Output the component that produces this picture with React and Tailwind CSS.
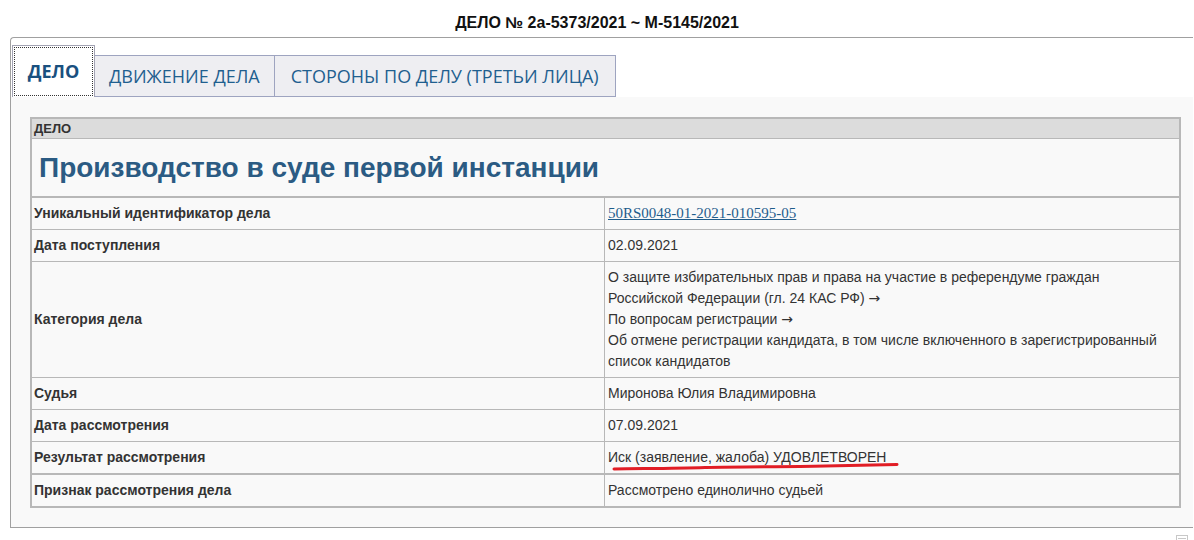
import React from 'react';

const Arrow = () => <span className="font-['DejaVu_Sans',sans-serif] text-[14px]">→</span>;

const rows = [
  { label: 'Уникальный идентификатор дела', link: '50RS0048-01-2021-010595-05' },
  { label: 'Дата поступления', value: '02.09.2021' },
  {
    label: 'Категория дела',
    lines: [
      'О защите избирательных прав и права на участие в референдуме граждан',
      <>Российской Федерации (гл. 24 КАС РФ) <Arrow /></>,
      <>По вопросам регистрации <Arrow /></>,
      'Об отмене регистрации кандидата, в том числе включенного в зарегистрированный',
      'список кандидатов',
    ],
  },
  { label: 'Судья', value: 'Миронова Юлия Владимировна' },
  { label: 'Дата рассмотрения', value: '07.09.2021' },
  { label: 'Результат рассмотрения', value: 'Иск (заявление, жалоба) УДОВЛЕТВОРЕН', marked: true },
  { label: 'Признак рассмотрения дела', value: 'Рассмотрено единолично судьей' },
];

function Tabs() {
  return (
    <div className="flex items-end pl-[1px] pt-[7px] font-['Open_Sans',sans-serif] text-[18px] text-[#1f5f8f]">
      <div className="h-[52px] w-[83px] border border-b-0 border-[#a3a3b3] bg-white p-[1px]">
        <div className="flex h-full items-center justify-center border border-dotted border-[#333] font-bold text-[#19507f]">
          ДЕЛО
        </div>
      </div>
      <div className="flex h-[42px] items-center border border-l-0 border-[#9ea4c0] bg-[#eeeef2] px-[14px]">
        ДВИЖЕНИЕ ДЕЛА
      </div>
      <div className="flex h-[42px] items-center border border-l-0 border-[#9ea4c0] bg-[#eeeef2] px-[16px]">
        СТОРОНЫ ПО ДЕЛУ (ТРЕТЬИ ЛИЦА)
      </div>
    </div>
  );
}

function Row({ row }) {
  return (
    <div
      className={`grid grid-cols-[573px_1fr] ${row.thick ? 'border-t-2' : 'border-t'} border-[#b8b8b8] text-[14px] leading-[21px] text-[#333]`}
    >
      <div className="flex items-center border-r border-[#b8b8b8] px-[2px] py-[5px] font-bold">{row.label}</div>
      <div className="relative px-[3px] py-[5px]">
        {row.link && (
          <a href="#" className="font-['Liberation_Serif',serif] text-[15px] text-[#1f5d8c] underline">
            {row.link}
          </a>
        )}
        {row.value}
        {row.lines && row.lines.map((l, i) => <div key={i} className="whitespace-nowrap">{l}</div>)}
        {row.marked && (
          <svg className="absolute left-0 top-0" width="300" height="32" viewBox="0 0 300 32">
            <path
              d="M9 27 C 40 26.5, 70 26.5, 100 25.5 C 140 24.5, 180 25, 220 24 C 250 23.5, 275 23, 292 22.5"
              fill="none"
              stroke="#e11d25"
              strokeWidth="3"
              strokeLinecap="round"
            />
          </svg>
        )}
      </div>
    </div>
  );
}

export default function App() {
  return (
    <div className="min-h-[540px] bg-white font-['Liberation_Sans',Arial,sans-serif]">
      <div className="flex h-[37px] items-center justify-center pt-[9px] text-[16px] font-bold text-[#111]">
        ДЕЛО № 2а-5373/2021 ~ М-5145/2021
      </div>

      <div className="ml-[10px] mr-[1px] rounded-tl-[4px] border-y border-l border-[#a0a0a0]">
        <Tabs />

        <div className="bg-[#f9f9f9] pb-[19px] pl-[19px] pr-[12px] pt-[20px]">
          <div className="border-2 border-[#b8b8b8]">
            <div className="bg-[#dcdcdc] px-[2px] text-[13px] font-bold leading-[19px] text-[#333]">ДЕЛО</div>
            <div className="flex h-[58px] items-center border-t border-[#b8b8b8] px-[7px] text-[28px] font-bold text-[#2b5b83]">
              Производство в суде первой инстанции
            </div>
            {rows.map((r, i) => (
              <Row key={i} row={{ ...r, thick: i === 0 || r.label === 'Признак рассмотрения дела' }} />
            ))}
          </div>
        </div>
      </div>

      <div className="flex justify-end pr-[6px] pt-[7px]">
        <svg width="12" height="8" viewBox="0 0 12 8">
          <rect x="0.5" y="0.5" width="11" height="9" fill="none" stroke="#c8c8c8" />
          <line x1="2" y1="3.5" x2="10" y2="3.5" stroke="#c8c8c8" />
        </svg>
      </div>
    </div>
  );
}
